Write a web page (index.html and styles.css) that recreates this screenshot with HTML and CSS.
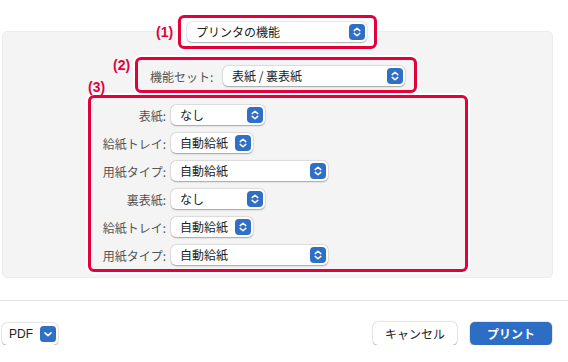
FILE: index.html
```html
<!DOCTYPE html>
<html lang="ja">
  <head>
    <meta charset="UTF-8" />
    <meta name="viewport" content="width=device-width, initial-scale=1.0" />
    <title>プリンタの機能</title>
    <link rel="stylesheet" href="styles.css">
  </head>
  <body>
    <div class="top">
      <span class="tag">(1)</span>
      <div class="mark mark1">
        <div class="pop pop-main">
          <span>プリンタの機能</span>
          <svg class="step" viewBox="0 0 16 16"><rect width="16" height="16" rx="4" fill="#2f6fc6"/><path d="M5.2 6.6 8 4.2l2.8 2.4M5.2 9.4 8 11.8l2.8-2.4" fill="none" stroke="#fff" stroke-width="1.5" stroke-linecap="round" stroke-linejoin="round"/></svg>
        </div>
      </div>
    </div>

    <div class="panel">
      <div class="row2">
        <span class="tag">(2)</span>
        <div class="mark mark2">
          <span class="lbl">機能セット:</span>
          <div class="pop pop-set">
            <span>表紙 / 裏表紙</span>
            <svg class="step" viewBox="0 0 16 16"><rect width="16" height="16" rx="4" fill="#2f6fc6"/><path d="M5.2 6.6 8 4.2l2.8 2.4M5.2 9.4 8 11.8l2.8-2.4" fill="none" stroke="#fff" stroke-width="1.5" stroke-linecap="round" stroke-linejoin="round"/></svg>
          </div>
        </div>
      </div>

      <div class="sec3">
        <span class="tag tag3">(3)</span>
        <div class="mark mark3">
          <span class="lbl">表紙:</span>
          <div class="pop pop-s">
            <span>なし</span>
            <svg class="step" viewBox="0 0 16 16"><rect width="16" height="16" rx="4" fill="#2f6fc6"/><path d="M5.2 6.6 8 4.2l2.8 2.4M5.2 9.4 8 11.8l2.8-2.4" fill="none" stroke="#fff" stroke-width="1.5" stroke-linecap="round" stroke-linejoin="round"/></svg>
          </div>
          <span class="lbl">給紙トレイ:</span>
          <div class="pop pop-t">
            <span>自動給紙</span>
            <svg class="step" viewBox="0 0 16 16"><rect width="16" height="16" rx="4" fill="#2f6fc6"/><path d="M5.2 6.6 8 4.2l2.8 2.4M5.2 9.4 8 11.8l2.8-2.4" fill="none" stroke="#fff" stroke-width="1.5" stroke-linecap="round" stroke-linejoin="round"/></svg>
          </div>
          <span class="lbl">用紙タイプ:</span>
          <div class="pop pop-l">
            <span>自動給紙</span>
            <svg class="step" viewBox="0 0 16 16"><rect width="16" height="16" rx="4" fill="#2f6fc6"/><path d="M5.2 6.6 8 4.2l2.8 2.4M5.2 9.4 8 11.8l2.8-2.4" fill="none" stroke="#fff" stroke-width="1.5" stroke-linecap="round" stroke-linejoin="round"/></svg>
          </div>
          <span class="lbl">裏表紙:</span>
          <div class="pop pop-s">
            <span>なし</span>
            <svg class="step" viewBox="0 0 16 16"><rect width="16" height="16" rx="4" fill="#2f6fc6"/><path d="M5.2 6.6 8 4.2l2.8 2.4M5.2 9.4 8 11.8l2.8-2.4" fill="none" stroke="#fff" stroke-width="1.5" stroke-linecap="round" stroke-linejoin="round"/></svg>
          </div>
          <span class="lbl">給紙トレイ:</span>
          <div class="pop pop-t">
            <span>自動給紙</span>
            <svg class="step" viewBox="0 0 16 16"><rect width="16" height="16" rx="4" fill="#2f6fc6"/><path d="M5.2 6.6 8 4.2l2.8 2.4M5.2 9.4 8 11.8l2.8-2.4" fill="none" stroke="#fff" stroke-width="1.5" stroke-linecap="round" stroke-linejoin="round"/></svg>
          </div>
          <span class="lbl">用紙タイプ:</span>
          <div class="pop pop-l">
            <span>自動給紙</span>
            <svg class="step" viewBox="0 0 16 16"><rect width="16" height="16" rx="4" fill="#2f6fc6"/><path d="M5.2 6.6 8 4.2l2.8 2.4M5.2 9.4 8 11.8l2.8-2.4" fill="none" stroke="#fff" stroke-width="1.5" stroke-linecap="round" stroke-linejoin="round"/></svg>
          </div>
        </div>
      </div>
    </div>

    <div class="footer">
      <div class="pdf">
        <span>PDF</span>
        <svg class="step" viewBox="0 0 16 16"><rect width="16" height="16" rx="3.5" fill="#2f6fc6"/><path d="M5 6.8 8 9.6l3-2.8" fill="none" stroke="#fff" stroke-width="1.6" stroke-linecap="round" stroke-linejoin="round"/></svg>
      </div>
      <div class="actions">
        <button class="btn">キャンセル</button>
        <button class="btn btn-blue">プリント</button>
      </div>
    </div>
  </body>
</html>
```

FILE: styles.css
```css
body {
  margin: 0;
  background: #fff;
  font-family: "Noto Sans CJK JP", "Liberation Sans", sans-serif;
  font-size: 12px;
  color: #222;
}
.tag {
  font-family: "Liberation Sans", sans-serif;
  font-weight: bold;
  font-size: 14px;
  line-height: 16px;
  color: #e4003b;
  width: 22px;
  flex: none;
}
.mark {
  border: 3px solid #e4003b;
  border-radius: 6px;
  box-shadow: 0 0 0 2px #fff;
}
.pop {
  height: 20px;
  box-sizing: border-box;
  background: #fff;
  border-radius: 5px;
  box-shadow: 0 0.5px 1.5px rgba(0, 0, 0, 0.3), 0 0 0 0.5px rgba(0, 0, 0, 0.08);
  display: flex;
  align-items: center;
  justify-content: space-between;
  padding: 0 2px 0 9px;
  line-height: 20px;
}
.step {
  width: 16px;
  height: 16px;
  display: block;
}
.lbl {
  color: #555;
}

/* (1) */
.top {
  position: relative;
  z-index: 1;
  display: flex;
  align-items: center;
  padding: 15px 0 0 156px;
}
.mark1 {
  width: 199px;
  height: 34px;
  box-sizing: border-box;
  background: #fff;
  padding: 4px 7px 4px 6px;
}

/* panel */
.panel {
  margin: -18px 15px 0 2px;
  height: 247px;
  box-sizing: border-box;
  background: #f4f4f4;
  border: 1px solid #ececec;
  border-radius: 5px;
  padding-top: 25px;
}
.row2 {
  display: flex;
  align-items: flex-start;
  padding-left: 110px;
}
.mark2 {
  width: 282px;
  height: 36px;
  box-sizing: border-box;
  display: flex;
  align-items: center;
  padding: 2px 9px 0 12px;
  background: #f4f4f4;
}
.pop-set {
  width: 182px;
  margin-left: auto;
}
.sec3 {
  padding-left: 85px;
}
.tag3 {
  display: block;
  margin-top: -14px;
}
.mark3 {
  width: 380px;
  height: 177px;
  box-sizing: border-box;
  padding-top: 3px;
  display: grid;
  grid-template-columns: 75px auto;
  grid-auto-rows: 28px;
  column-gap: 5px;
  align-items: center;
  justify-items: start;
}
.mark3 .lbl {
  justify-self: end;
}
.pop-s {
  width: 94px;
}
.pop-t {
  width: 82px;
}
.pop-l {
  width: 157px;
}

/* footer */
.footer {
  margin-top: 22px;
  border-top: 1px solid #e3e3e3;
  display: flex;
  justify-content: space-between;
  align-items: center;
  padding: 21px 16px 0 2px;
}
.pdf {
  width: 56px;
  height: 22px;
  box-sizing: border-box;
  background: #fff;
  border-radius: 5px;
  box-shadow: 0 0.5px 1.5px rgba(0, 0, 0, 0.3), 0 0 0 0.5px rgba(0, 0, 0, 0.08);
  display: flex;
  align-items: center;
  justify-content: space-between;
  padding: 0 2px 0 7px;
  font-family: "Liberation Sans", sans-serif;
  font-size: 12px;
}
.actions {
  display: flex;
  gap: 13px;
}
.btn {
  font-family: "Noto Sans CJK JP", sans-serif;
  font-size: 12px;
  height: 23px;
  width: 84px;
  padding: 0;
  border: none;
  border-radius: 5px;
  background: #fff;
  color: #222;
  box-shadow: 0 0.5px 1.5px rgba(0, 0, 0, 0.3), 0 0 0 0.5px rgba(0, 0, 0, 0.08);
}
.btn-blue {
  width: 82px;
  background: #2d6ec4;
  color: #fff;
  font-weight: bold;
}
```
